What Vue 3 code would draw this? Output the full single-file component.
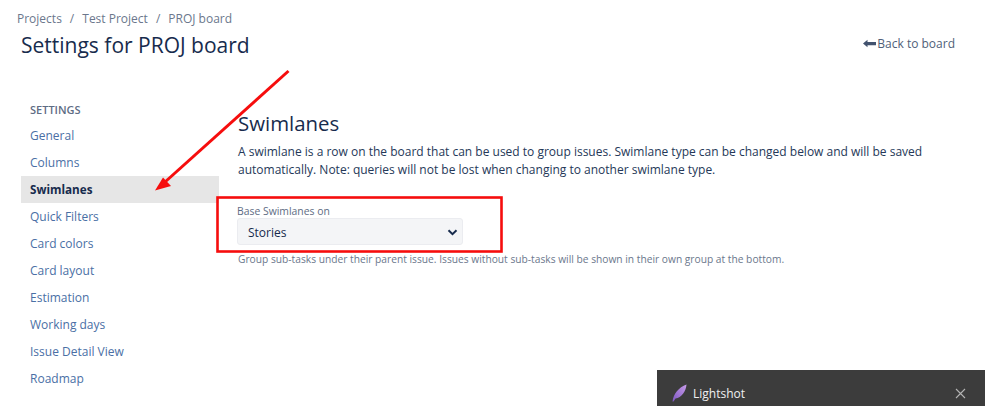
<template>
  <div class="page">
    <header class="top">
      <div class="heading">
        <nav class="crumbs">
          <a>Projects</a><span class="sep">/</span><a>Test Project</a><span class="sep">/</span><a>PROJ board</a>
        </nav>
        <h1>Settings for PROJ board</h1>
      </div>
      <a class="back">
        <svg width="13" height="9" viewBox="0 0 13 9"><path d="M0 4.500 4.500 .8v2.200H13v3.200H4.500V8.200z" fill="#42526e" /></svg>
        Back to board
      </a>
    </header>

    <div class="body">
      <aside class="side">
        <h4>SETTINGS</h4>
        <a v-for="item in items" :key="item" class="item" :class="{ active: item === 'Swimlanes' }">{{ item }}</a>
      </aside>

      <main class="content">
        <h2>Swimlanes</h2>
        <p class="intro">A swimlane is a row on the board that can be used to group issues. Swimlane type can be changed below and will be saved automatically. Note: queries will not be lost when changing to another swimlane type.</p>
        <label class="field-label">Base Swimlanes on</label>
        <div class="select">
          <span>Stories</span>
          <svg width="11" height="7" viewBox="0 0 11 7"><path d="M1.500 1.300 5.500 5.200 9.500 1.300" fill="none" stroke="#172b4d" stroke-width="2" /></svg>
        </div>
        <p class="hint">Group sub-tasks under their parent issue. Issues without sub-tasks will be shown in their own group at the bottom.</p>
      </main>
    </div>

    <!-- annotations drawn over the screenshot -->
    <svg class="marks" width="999" height="406" viewBox="0 0 999 406">
      <path d="M288.500 71 165 182" stroke="#f60d0d" stroke-width="3" fill="none" />
      <path d="M155 190.500 163 177.500 171 186z" fill="#f60d0d" />
      <rect x="217.500" y="197.500" width="284" height="54" fill="none" stroke="#f60d0d" stroke-width="2.600" />
    </svg>

    <div class="toast">
      <svg width="15" height="18" viewBox="0 0 15 18">
        <defs>
          <linearGradient id="feather" x1="0" y1="1" x2="1" y2="0">
            <stop offset="0" stop-color="#7e57c2" />
            <stop offset="1" stop-color="#c79be8" />
          </linearGradient>
        </defs>
        <path d="M0.500 17.500C1.500 10 6.500 3.500 14.500 .5 14 7.500 9.500 13.500 3.500 14.500L1.500 17.500z" fill="url(#feather)" />
      </svg>
      <span>Lightshot</span>
      <svg class="close" width="11" height="11" viewBox="0 0 11 11"><path d="M1 1 10 10M10 1 1 10" stroke="#b4b4b4" stroke-width="1.100" /></svg>
    </div>
  </div>
</template>

<script setup>
const items = [
  'General',
  'Columns',
  'Swimlanes',
  'Quick Filters',
  'Card colors',
  'Card layout',
  'Estimation',
  'Working days',
  'Issue Detail View',
  'Roadmap',
]
</script>

<style>
html,
body {
  margin: 0;
  background: #fff;
  overflow: hidden;
}
</style>

<style scoped>
.page {
  position: relative;
  width: 999px;
  height: 406px;
  overflow: hidden;
  font-family: "Open Sans", "Noto Sans", sans-serif;
  font-size: 12px;
  color: #172b4d;
}

.top {
  display: flex;
  justify-content: space-between;
  align-items: flex-start;
  padding: 10px 44px 0 17px;
}

.crumbs {
  height: 17px;
  line-height: 17px;
  color: #6b778c;
}

.sep {
  margin: 0 8px;
}

h1 {
  margin: 4px 0 0 4px;
  font-size: 21px;
  line-height: 28px;
  font-weight: 500;
}

.back {
  display: flex;
  align-items: center;
  gap: 1px;
  margin-top: 25px;
  line-height: 17px;
  color: #505f79;
}

.body {
  display: flex;
  margin-top: 41px;
  padding-left: 21px;
}

.side {
  width: 198px;
}

h4 {
  margin: 0;
  padding: 0 9px;
  height: 22px;
  line-height: 20px;
  font-size: 11px;
  font-weight: 600;
  color: #5e6c84;
}

.item {
  display: block;
  height: 27px;
  line-height: 27px;
  padding: 0 9px;
  color: #4a6fa5;
}

.item.active {
  background: #e6e6e6;
  color: #172b4d;
  font-weight: 700;
  font-size: 11.700px;
}

.content {
  width: 700px;
  padding: 9px 0 0 19px;
}

h2 {
  margin: 0;
  font-size: 20.400px;
  line-height: 28px;
  font-weight: 500;
}

.intro {
  margin: 6px 0 0;
  line-height: 18px;
  color: #253858;
}

.field-label {
  display: block;
  margin-top: 25px;
  margin-left: -1px;
  font-size: 10.400px;
  line-height: 14px;
  color: #5e6c84;
}

.select {
  display: flex;
  align-items: center;
  justify-content: space-between;
  box-sizing: border-box;
  width: 226px;
  height: 27px;
  margin-left: -1px;
  padding: 1px 4px 0 10px;
  background: #f4f5f7;
  border: 1px solid #ebecf0;
  border-radius: 3px;
}

.hint {
  margin: 7px 0 0;
  font-size: 10.220px;
  line-height: 14px;
  color: #6b778c;
}

.marks {
  position: absolute;
  left: 0;
  top: 0;
  pointer-events: none;
}

.toast {
  position: absolute;
  left: 657px;
  top: 370px;
  width: 328px;
  height: 36px;
  display: flex;
  align-items: center;
  gap: 6px;
  padding: 10px 19px 0 15px;
  box-sizing: border-box;
  background: #3c3c3c;
  color: #f0f0f0;
  font-size: 12px;
}

.close {
  margin-left: auto;
}
</style>
